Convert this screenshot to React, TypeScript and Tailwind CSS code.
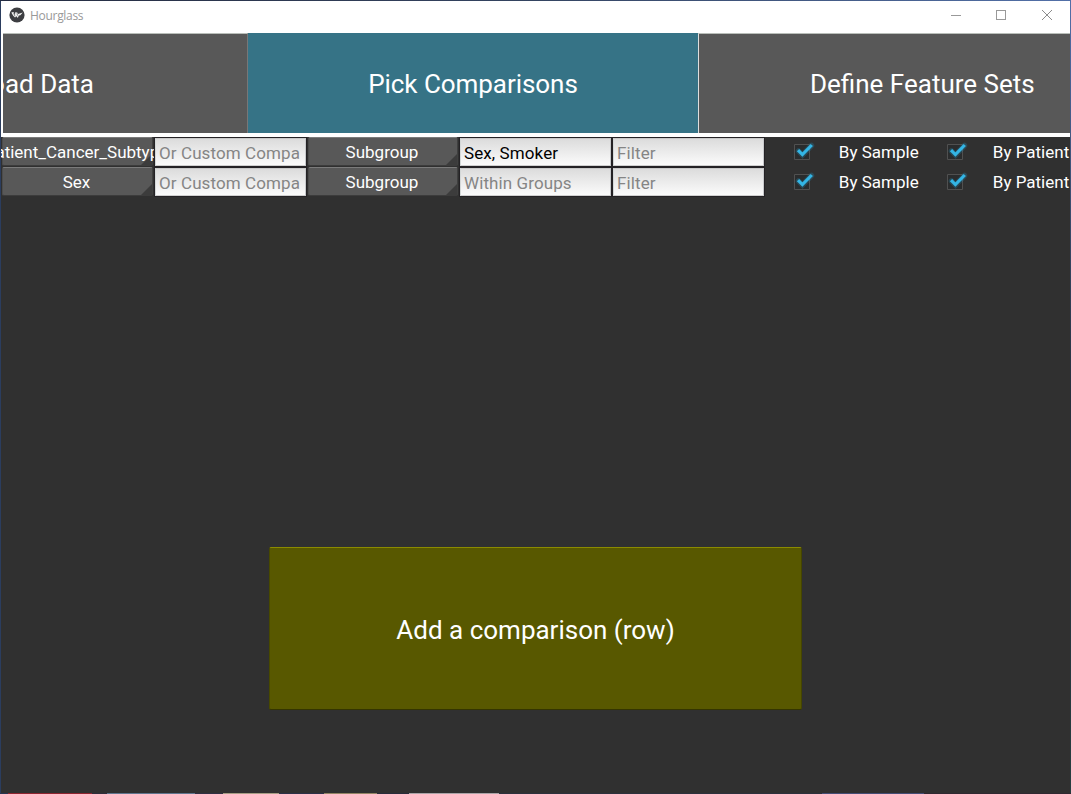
import React from "react";

function Logo() {
  return (
    <svg className="block h-4 w-4" viewBox="0 0 16 16">
      <circle cx="8" cy="8" r="7.6" fill="#3d3e42" />
      <path d="M2.3 5.6 L4.4 5 L6 8 L6.2 5.2 L8.2 5.6 L9 7 L13.8 5.6 L11.3 8.2 L9.8 8.5 L8.8 11 L7.6 9.2 L6 10.4 L4.2 8.8 Z" fill="#f4f4f4" />
      <path d="M4.6 6.2 L6.1 9.3 M8 6.4 L8.6 8.6" stroke="#3d3e42" strokeWidth=".6" />
    </svg>
  );
}

function TitleBar() {
  return (
    <header className="flex h-8 items-center justify-between bg-white pl-2 text-[12px] text-[#999]">
      <div className="flex h-full items-start gap-[5px] pt-[6px] font-['Open_Sans','Noto_Sans',sans-serif]">
        <Logo />
        <span className="leading-[18px] tracking-[-0.3px]">Hourglass</span>
      </div>
      <div className="flex h-full">
        <svg className="h-8 w-[46px]" shapeRendering="crispEdges">
          <path d="M18 14.5h10" stroke="#999" />
        </svg>
        <svg className="h-8 w-[46px]" shapeRendering="crispEdges">
          <path d="M17.5 9.5h9v9h-9z" stroke="#999" fill="none" />
        </svg>
        <svg className="h-8 w-[45px]">
          <path d="M17 9l10 10M27 9l-10 10" stroke="#8c8c8c" />
        </svg>
      </div>
    </header>
  );
}

function Spinner({ label }: { label: string }) {
  return (
    <div className="flex h-[30px] w-full pr-px pl-px">
      <div className="relative flex h-[29px] w-full min-w-0 items-center justify-center rounded-[2px] border border-t-[#7b7b7b] border-r-[#404040] border-b-[#3c3c3c] border-l-[#4c4c4c] bg-[#585858]">
        <svg className="absolute right-0 bottom-0 h-[11px] w-[11px]" viewBox="0 0 11 11">
          <path d="M11 0V11H0z" fill="#3c3c3c" />
        </svg>
        <span className="relative mr-[2px] whitespace-nowrap">{label}</span>
      </div>
    </div>
  );
}

function Field({ value, hint }: { value?: string; hint: string }) {
  return (
    <div className="relative flex h-[30px] w-full">
      <div className="h-[30px] w-full border border-[#242225]">
        <div className="flex h-[28px] items-center overflow-hidden border border-t-[#c8c8c8] border-r-[#c8cacc] border-b-[#d0d0d0] border-l-[#d4d8d8] bg-linear-to-b from-[#dcdcdc] to-[#fbfbfb] pt-px pl-[3px] tracking-[0.1px]">
          <span className={value ? "whitespace-nowrap text-black" : "whitespace-nowrap text-[#858585]"}>{value ?? hint}</span>
        </div>
      </div>
    </div>
  );
}

function Check({ label }: { label: string }) {
  return (
    <div className="grid h-[30px] w-full grid-cols-2 items-center">
      <svg className="mr-[2px] block h-[30px] w-[32px] justify-self-center" viewBox="0 0 32 30">
        <path d="M8.5 7.5h15v15h-15z" fill="#2a2c2d" stroke="#505050" />
        <path d="M12.5 14l4 4L25.5 8.5" fill="none" stroke="#249bcc" strokeWidth="5.5" opacity=".25" strokeLinecap="round" />
        <path d="M12 13.2l4.4 4.4L25.8 8" fill="none" stroke="#33b5e5" strokeWidth="3.2" />
      </svg>
      <span className="mr-[2px] justify-self-center whitespace-nowrap pb-px text-white">{label}</span>
    </div>
  );
}

function ComparisonRow({ name, within }: { name: string; within?: string }) {
  return (
    <div className="grid h-[30px] grid-cols-[153px_153px_152px_153px_153px_153px_152px]">
      <Spinner label={name} />
      <Field hint="Or Custom Compa" />
      <Spinner label="Subgroup" />
      <Field value={within} hint="Within Groups" />
      <Field hint="Filter" />
      <Check label="By Sample" />
      <Check label="By Patient" />
    </div>
  );
}

const taskbar = [
  ["w-[8px]", "bg-[#283450]"],
  ["w-[84px]", "bg-[#8f2430]"],
  ["w-[15px]", "bg-[#302d3b]"],
  ["w-[88px]", "bg-[#5f758e]"],
  ["w-[28px]", "bg-[#302f42]"],
  ["w-[56px]", "bg-[#a69d84]"],
  ["w-[45px]", "bg-[#2c3047]"],
  ["w-[53px]", "bg-[#938565]"],
  ["w-[32px]", "bg-[#292c3b]"],
  ["w-[90px]", "bg-[#aaa4a7]"],
  ["w-[323px]", "bg-[#2c303c]"],
  ["w-[102px]", "bg-[#454d76]"],
  ["w-[147px]", "bg-[#302831]"],
];

export default function App() {
  return (
    <div className="flex h-[794px] w-[1071px] flex-col overflow-hidden bg-[#303030] font-[Roboto,sans-serif] text-white">
      <div className="h-px bg-linear-to-r from-[#252c41] via-[#344461] to-[#5270a8]" />
      <div className="flex h-[792px]">
        <div className="w-px bg-[#2b3d5e]" />
        <main className="flex w-[1069px] flex-col overflow-hidden bg-[#303030]">
          <TitleBar />
          <nav className="flex h-[104px] bg-white pb-1 pl-[2px] text-[26px]">
            <div className="flex w-[245px] items-center justify-end overflow-hidden border-t border-r border-t-[#b9beb9] border-r-[#777] bg-[#585858] pt-[2px] pr-[153px] whitespace-nowrap">
              <span>Load Data</span>
            </div>
            <div className="flex w-[450px] items-center justify-center bg-[#367386] pt-[2px] tracking-[-0.05px]">Pick Comparisons</div>
            <div className="flex w-[372px] items-center overflow-hidden border-t border-l border-t-[#b9beb9] border-l-[#dedede] bg-[#585858] pt-[2px] pl-[111px] whitespace-nowrap">
              Define Feature Sets
            </div>
          </nav>
          <section className="text-[17px] leading-[20px]">
            <ComparisonRow name="Patient_Cancer_Subtype" within="Sex, Smoker" />
            <ComparisonRow name="Sex" />
          </section>
          <div className="flex grow items-start justify-center pt-[350px]">
            <button className="h-[163px] w-[533px] rounded-[2px] border border-t-[#8b8b00] border-r-[#454500] border-b-[#343500] border-l-[#484900] bg-[#585800] pt-[4px] text-[26px]">
              Add a comparison (row)
            </button>
          </div>
        </main>
        <div className="w-px bg-linear-to-b from-[#526fa9] via-[#26303c] to-[#263e40]" />
      </div>
      <div className="flex h-px">
        {taskbar.map(([w, color], i) => (
          <div key={i} className={`h-px ${w} ${color}`} />
        ))}
      </div>
    </div>
  );
}
